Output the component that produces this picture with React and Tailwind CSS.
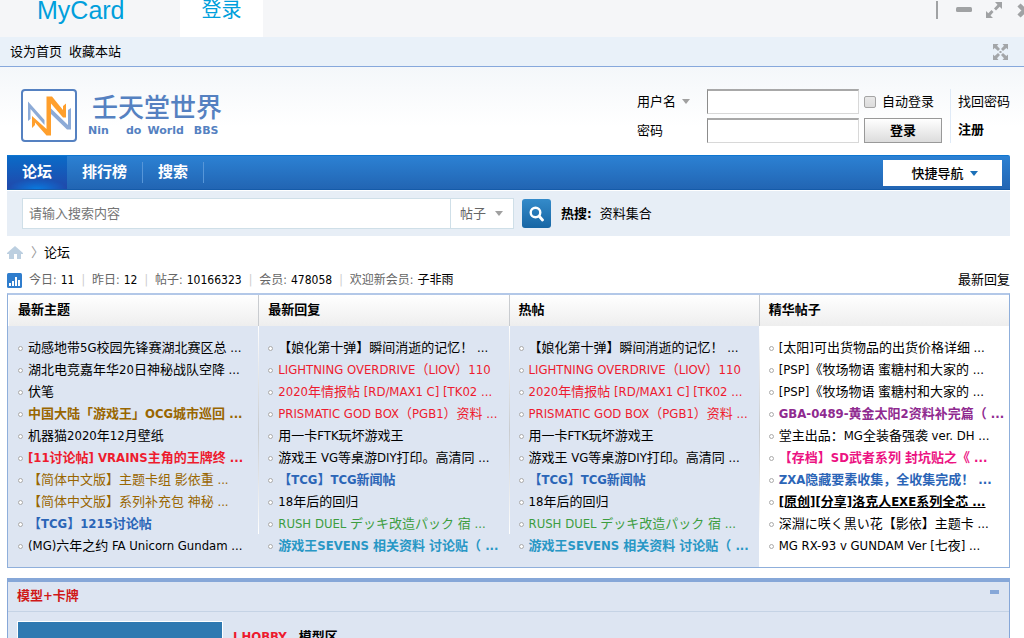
import { useState } from "react";

const LATEST_THREADS = [
  { text: "动感地带5G校园先锋赛湖北赛区总 ..." },
  { text: "湖北电竞嘉年华20日神秘战队空降 ..." },
  { text: "伏笔" },
  { text: "中国大陆「游戏王」OCG城市巡回 ...", style: "font-bold text-[#996600]" },
  { text: "机器猫2020年12月壁纸" },
  { text: "[11讨论帖] VRAINS主角的王牌终 ...", style: "font-bold text-[#ee1b2e]" },
  { text: "【简体中文版】主题卡组 影依重 ...", style: "text-[#996600]" },
  { text: "【简体中文版】系列补充包 神秘 ...", style: "text-[#996600]" },
  { text: "【TCG】1215讨论帖", style: "font-bold text-[#2b65b7]" },
  { text: "(MG)六年之约 FA Unicorn Gundam ..." },
];

const HOT_THREADS = [
  { text: "【娘化第十弹】瞬间消逝的记忆！ ..." },
  { text: "LIGHTNING OVERDRIVE（LIOV）110", style: "text-[#ee1b2e]" },
  { text: "2020年情报帖 [RD/MAX1 C] [TK02 ...", style: "text-[#ee1b2e]" },
  { text: "PRISMATIC GOD BOX（PGB1）资料 ...", style: "text-[#ee1b2e]" },
  { text: "用一卡FTK玩坏游戏王" },
  { text: "游戏王 VG等桌游DIY打印。高清同 ..." },
  { text: "【TCG】TCG新闻帖", style: "font-bold text-[#2b65b7]" },
  { text: "18年后的回归" },
  { text: "RUSH DUEL デッキ改造パック 宿 ...", style: "text-[#3c9d40]" },
  { text: "游戏王SEVENS 相关资料 讨论贴（ ...", style: "font-bold text-[#2897c5]" },
];

const DIGEST_THREADS = [
  { text: "[太阳]可出货物品的出货价格详细 ..." },
  { text: "[PSP]《牧场物语 蜜糖村和大家的 ..." },
  { text: "[PSP]《牧场物语 蜜糖村和大家的 ..." },
  { text: "GBA-0489-黄金太阳2资料补完篇（ ...", style: "font-bold text-[#8f2a90]" },
  { text: "堂主出品：MG全装备强袭 ver. DH ..." },
  { text: "【存档】SD武者系列 封坑贴之《 ...", style: "font-bold text-[#ec1282]" },
  { text: "ZXA隐藏要素收集，全收集完成！ ...", style: "font-bold text-[#2b65b7]" },
  { text: "[原创][分享]洛克人EXE系列全芯 ...", style: "font-bold underline" },
  { text: "深淵に咲く黒い花【影依】主题卡 ..." },
  { text: "MG RX-93 v GUNDAM Ver [七夜] ..." },
];

const COLUMNS = [
  { title: "最新主题", items: LATEST_THREADS },
  { title: "最新回复", items: HOT_THREADS },
  { title: "热帖", items: HOT_THREADS },
  { title: "精华帖子", items: DIGEST_THREADS, plain: true },
];

const STATS = [
  ["今日", "11"],
  ["昨日", "12"],
  ["帖子", "10166323"],
  ["会员", "478058"],
  ["欢迎新会员", "子非雨"],
];

export default function App() {
  return (
    <div className="h-dvh overflow-hidden bg-white font-['DejaVu_Sans_Condensed','Noto_Sans_CJK_SC',sans-serif] text-[13px] leading-[22px] text-black">
      <WindowBar />
      <ToolBar />
      <div className="bg-linear-to-b from-[#f4f7fa] to-white to-[60px] pr-[14px] pl-[7px]">
        <Header />
        <NavBar />
        <SearchBar />
        <nav className="mt-[6px] flex items-center" aria-label="位置">
          <a href="#home" aria-label="首页">
            <HomeIcon />
          </a>
          <span className="ml-2 text-[#999]">〉</span>
          <a href="#forum">论坛</a>
        </nav>
        <Stats />
        <ThreadTable />
        <Category />
      </div>
    </div>
  );
}

function WindowBar() {
  return (
    <header className="flex h-[37px] items-start bg-[#f5f6f8] text-[#009fdc]">
      <a
        href="#mycard"
        className="w-[180px] pl-[37px] font-['Liberation_Sans',sans-serif] text-[25px] leading-5"
      >
        MyCard
      </a>
      <a
        href="#login"
        className="h-full w-[83px] bg-white text-center text-[20px] leading-5"
      >
        登录
      </a>
      <div className="-mr-[9px] ml-auto flex h-5 items-center text-[#a0a2a4]">
        <span className="mr-[18px] h-[18px] w-[2px] bg-[#a0a2a4]" />
        <button type="button" aria-label="最小化" className="mr-[13px]">
          <svg width="16" height="18" viewBox="0 0 16 18" fill="currentColor">
            <rect x="0" y="6" width="16" height="5" rx="1.5" />
          </svg>
        </button>
        <button type="button" aria-label="最大化" className="mr-[14px]">
          <svg width="18" height="18" viewBox="0 0 18 18" fill="currentColor">
            <path d="M10 1h7v7l-2.300-2.300-3.700 3.700-2-2 3.500-3.700zM1 10l2.300 2.300 3.200-3.200 2 2-3 3.400L8 17H1z" />
          </svg>
        </button>
        <button type="button" aria-label="关闭">
          <svg width="16" height="18" viewBox="0 0 16 18" fill="none" stroke="currentColor" strokeWidth="4.500">
            <path d="M2 4l11 11M13 4L2 15" />
          </svg>
        </button>
      </div>
    </header>
  );
}

function ToolBar() {
  return (
    <div className="flex h-[30px] items-center gap-[7px] border-b border-[#86a8dc] bg-[#e9f1f9] pr-[16px] pl-[10px]">
      <a href="#sethome">设为首页</a>
      <a href="#favorite">收藏本站</a>
      <button type="button" aria-label="切换到宽版" className="ml-auto text-[#a3a6a9]">
        <svg width="15" height="16" viewBox="0 0 15 16" fill="currentColor">
          <path d="M0 0h5.500L4 1.700l3 3.300-2 2L1.700 4 0 5.500zM15 0v5.500L13.300 4 10 7 8 5l3-3.300L9.500 0zM0 16v-5.500L1.700 12 5 9l2 2-3 3.300L5.500 16zM15 16H9.500l1.500-1.700L8 11l2-2 3.300 3 1.700-1.500z" />
          <rect x="6.500" y="7" width="2" height="2" />
        </svg>
      </button>
    </div>
  );
}

function Caret({ className }) {
  return (
    <svg className={className} width="8" height="5" viewBox="0 0 8 5" fill="currentColor" aria-hidden="true">
      <path d="M0 0h8L4 5z" />
    </svg>
  );
}

function Header() {
  const [remember, setRemember] = useState(false);
  const box =
    "h-[25px] w-[152px] border border-t-2 border-[#d8d8d8] border-t-[#a8a8a8] border-l-[#8c8c8c] bg-white px-1 outline-none";

  return (
    <div className="flex h-[88px] items-start justify-between pt-[22px]">
      <a href="#home" className="flex pl-[13px] text-[#5581c1]">
        <Logo />
        <span className="ml-[11px] flex flex-col">
          <span className="pl-1 font-['Noto_Sans_CJK_SC',sans-serif] text-[26px] leading-[34px] font-medium">
            壬天堂世界
          </span>
          <span className="flex gap-[6px] font-['DejaVu_Sans',sans-serif] text-[11px] leading-4 font-bold">
            <span className="w-8">Nin</span>
            <span>do</span>
            <span>World</span>
            <span className="pl-1">BBS</span>
          </span>
        </span>
      </a>

      <form className="flex" onSubmit={(event) => event.preventDefault()}>
        <div className="flex flex-col gap-1">
          <div className="flex items-center">
            <label className="flex w-[70px] items-center">
              <select aria-label="登录方式" className="appearance-none bg-transparent outline-none">
                <option>用户名</option>
              </select>
              <Caret className="ml-[5px] text-[#a0a0a0]" />
            </label>
            <input type="text" aria-label="用户名" className={box} />
            <label className="ml-[5px] flex w-[78px] items-center gap-[6px] whitespace-nowrap">
              <input
                type="checkbox"
                checked={remember}
                onChange={(event) => setRemember(event.target.checked)}
                className="size-3 shrink-0 appearance-none rounded-xs border border-[#a5a5a5] bg-linear-to-b from-[#e8e8e8] to-[#dcdcdc] checked:bg-[#2b7acd]"
              />
              自动登录
            </label>
          </div>
          <div className="flex items-center">
            <label htmlFor="password" className="w-[70px]">
              密码
            </label>
            <input id="password" type="password" className={box} />
            <button
              type="submit"
              className="ml-[5px] h-[25px] w-[78px] border border-[#999] bg-linear-to-b from-white to-[#dcdcdc] font-bold"
            >
              登录
            </button>
          </div>
        </div>
        <div className="ml-2 flex flex-col gap-[6px] border-l border-[#dfeaf7] pt-[2px] pl-[7px]">
          <a href="#recover">找回密码</a>
          <a href="#register" className="font-bold">
            注册
          </a>
        </div>
      </form>
    </div>
  );
}

function Logo() {
  return (
    <svg width="57" height="53" viewBox="0 0 57 53" aria-hidden="true">
      <rect x="2" y="1" width="54" height="51" rx="3" fill="#fff" stroke="#5581c1" strokeWidth="2" />
      <path d="M8 12.500L24.500 31V36L10.500 20V30L8 32z" fill="#8dabd7" />
      <path d="M31 19.500L48 36V21l3-2v21.500h-4L31 25z" fill="#8dabd7" />
      <path d="M12 27L26.500 40V7.500H32L43 21V17l3-2.500V28.500h-3L31 14.500V46.500H26.500L15 33.500V36L12 39z" fill="#ff9f2c" />
    </svg>
  );
}

function NavBar() {
  return (
    <nav className="flex h-[35px] items-stretch rounded-tr-xs border-t border-b border-t-[#0d76d1] border-b-[#155ba9] bg-linear-to-b from-[#2c81d3] to-[#2265b3] pr-2 text-[15px] leading-[33px] font-bold text-white">
      <a
        href="#forum"
        className="bg-[radial-gradient(30px_10px_at_bottom,#087be0,transparent),linear-gradient(#0a6bc8,#2148aa)] px-[15px]"
      >
        论坛
      </a>
      <a href="#rank" className="px-[15px]">
        排行榜
      </a>
      <span className="my-[6px] w-px bg-[#5796d8]" />
      <a href="#search" className="px-[15px]">
        搜索
      </a>
      <span className="my-[6px] w-px bg-[#5796d8]" />
      <button
        type="button"
        className="mt-[4px] ml-auto flex h-[26px] w-[119px] items-center justify-center bg-white pl-1 text-[13px] font-medium text-black"
      >
        快捷导航
        <Caret className="ml-[6px] text-[#1b70b8]" />
      </button>
    </nav>
  );
}

function SearchBar() {
  return (
    <form
      className="mt-px flex h-[45px] items-center bg-[#e7eef6] pl-[15px]"
      onSubmit={(event) => event.preventDefault()}
    >
      <input
        type="text"
        aria-label="搜索内容"
        placeholder="请输入搜索内容"
        className="h-[31px] w-[429px] border border-[#cfdfe8] bg-white px-[6px] outline-none placeholder:text-[#757575]"
      />
      <label className="flex h-[31px] w-[63px] items-center border border-l-0 border-[#cfdfe8] bg-white pl-[9px] text-[#666]">
        <select aria-label="搜索类型" className="appearance-none bg-transparent outline-none">
          <option>帖子</option>
        </select>
        <Caret className="ml-[8px] text-[#a0a0a0]" />
      </label>
      <button
        type="submit"
        aria-label="搜索"
        className="ml-2 flex h-[29px] w-[29px] items-center justify-center rounded-[3px] bg-linear-to-b from-[#348bca] to-[#1766a4] text-white"
      >
        <svg width="15" height="16" viewBox="0 0 15 16" fill="none" stroke="currentColor">
          <circle cx="6.500" cy="6.500" r="4.800" strokeWidth="2.400" />
          <path d="M10 10l3.500 4" strokeWidth="2.800" strokeLinecap="round" />
        </svg>
      </button>
      <strong className="ml-[10px]">热搜:</strong>
      <a href="#collection" className="ml-2">
        资料集合
      </a>
    </form>
  );
}

function HomeIcon() {
  return (
    <svg width="16" height="14" viewBox="0 0 16 14" fill="#bccfe0">
      <path d="M8 0l8 7v1h-2v5h-4V8H7v5H2V8H0V7z" />
    </svg>
  );
}

function Stats() {
  return (
    <div className="mt-1 mb-px flex h-[24px] items-center">
      <svg width="15" height="15" viewBox="0 0 15 15" aria-hidden="true">
        <rect width="15" height="15" rx="1.500" fill="#2f7dcd" />
        <path d="M2 10h2v3H2zM5 8h2v5H5zM8 4h2v9H8zM11 7h2v6h-2z" fill="#fff" />
      </svg>
      <ul className="ml-[7px] flex text-[12px]">
        {STATS.map(([label, value], index) => (
          <li key={label} className="flex">
            {index > 0 && <span className="mx-[7px] text-[#ccc]">|</span>}
            <span className="mr-1 text-[#666]">{label}:</span>
            <span>{value}</span>
          </li>
        ))}
      </ul>
      <a href="#new" className="ml-auto">
        最新回复
      </a>
    </div>
  );
}

function ThreadTable() {
  return (
    <div className="grid grid-cols-4 border border-t-2 border-[#8fafdb] border-t-[#b3c8e8]">
      {COLUMNS.map((column) => (
        <ThreadColumn key={column.title} {...column} />
      ))}
    </div>
  );
}

function ThreadColumn({ title, items, plain }) {
  return (
    <section className={plain ? "group min-w-0" : "group min-w-0 bg-[#dde5f2]"}>
      <h2 className="h-[31px] border-l border-[#c9ccd0] bg-linear-to-b from-white to-[#eeeeee] pl-[9px] leading-[30px] font-bold group-first:border-white">
        {title}
      </h2>
      <div className="flex items-start">
        <span className="h-[208px] w-px bg-linear-to-b from-white via-[#c9ccd0] to-white group-first:invisible" />
        <ul className="min-w-0 flex-1 pt-[11px] pb-[10px] pl-[9px]">
          {items.map((item, index) => (
            <li key={index} className="flex items-center gap-[5px]">
              <span className="size-[5px] shrink-0 rounded-full border border-[#aaa] bg-white" />
              <a href="#thread" className={`whitespace-nowrap ${item.style ?? ""}`}>
                {item.text}
              </a>
            </li>
          ))}
        </ul>
      </div>
    </section>
  );
}

function Category() {
  return (
    <section className="mt-[10px] border-x border-t-4 border-[#86a7d8] bg-[#dde5f2]">
      <div className="flex h-[30px] items-center justify-between border-b border-[#c5d3e5] pr-[10px] pb-[2px] pl-[9px]">
        <h2 className="font-bold text-[#d01818]">模型+卡牌</h2>
        <button type="button" aria-label="收起" className="mb-2 h-1 w-[9px] bg-[#86a7d8]" />
      </div>
      <div className="flex items-start px-[9px] pt-[9px]">
        <a
          href="#hobby"
          aria-label="I HOBBY"
          className="h-[60px] w-[206px] border border-white bg-[#2f79b1]"
        />
        <h3 className="ml-[10px] flex gap-3 pt-[5px] font-bold">
          <a href="#hobby" className="text-[#ee1b2e]">
            I HOBBY
          </a>
          <a href="#models">模型区</a>
        </h3>
      </div>
    </section>
  );
}
